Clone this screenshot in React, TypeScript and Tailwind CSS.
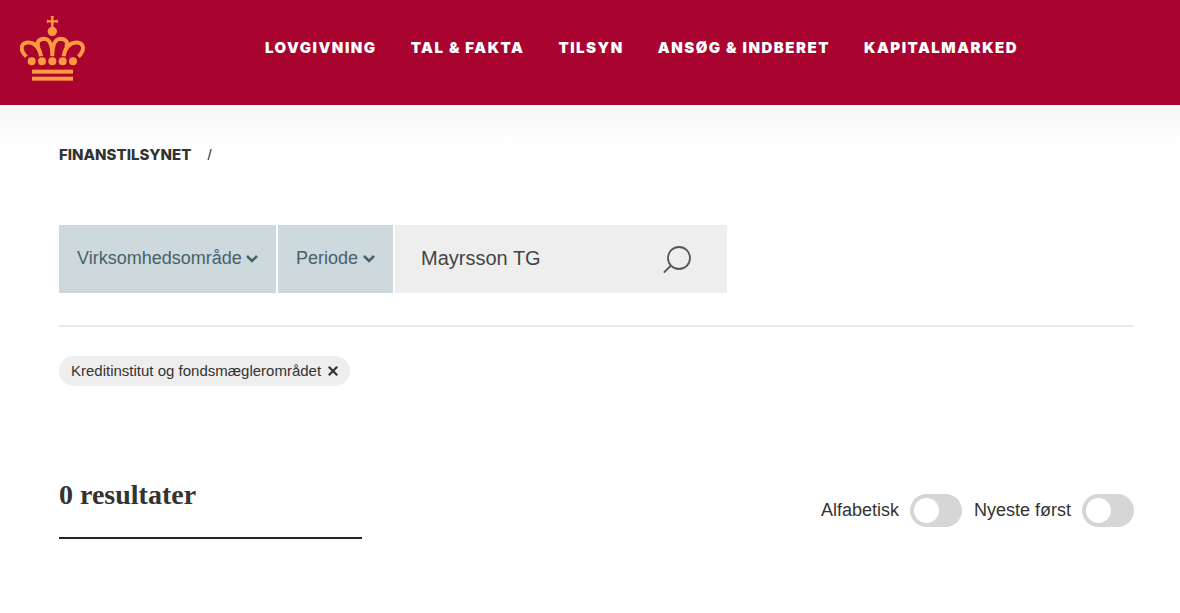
import { useState } from "react";

const navItems = [
  "Lovgivning",
  "Tal & Fakta",
  "Tilsyn",
  "Ansøg & Indberet",
  "Kapitalmarked",
];

export default function App() {
  return (
    <div className="min-h-screen bg-white font-['Liberation_Sans',sans-serif] text-[#333333]">
      <Header />
      <main className="bg-linear-to-b from-[#f6f6f6] to-white to-[40px] pl-[59px] pr-[46px]">
        <Breadcrumb />
        <Filters />
        <hr className="mt-8 border-t-2 border-[#e9e9e9]" />
        <ActiveFilter />
        <Results />
      </main>
    </div>
  );
}

function Header() {
  return (
    <header className="flex h-[105px] bg-[#a9032f] px-5">
      <a href="#" aria-label="Finanstilsynet" className="mt-[15px]">
        <Crown />
      </a>
      <nav className="ml-[179px] mt-[38px] flex gap-[34px] whitespace-nowrap font-['Inter',sans-serif] text-[15px] font-black uppercase leading-5 tracking-widest text-white">
        {navItems.map((item) => (
          <a key={item} href="#" className="h-5">
            {item}
          </a>
        ))}
      </nav>
    </header>
  );
}

function Crown() {
  return (
    <svg
      viewBox="30 30 198 198"
      className="h-[66px] w-[66px]"
      fill="none"
      stroke="#ff9a40"
      aria-hidden="true"
    >
      <path d="M127 33V68M112 49H142" strokeWidth="7" />
      <path d="M122 35H132M112 44V54M142 44V54" strokeWidth="3" />
      <g fill="#ff9a40" stroke="none">
        <circle cx="127" cy="79" r="14" />
        <circle cx="65" cy="169" r="12" />
        <circle cx="96" cy="169" r="12" />
        <circle cx="127" cy="169" r="12" />
        <circle cx="158" cy="169" r="12" />
        <circle cx="189" cy="169" r="12" />
        <rect x="66" y="194" width="123" height="12" />
        <rect x="66" y="215" width="123" height="12" />
      </g>
      <g strokeWidth="12">
        <path d="M49 155C37 143 32 131 37 121C43 110 60 110 72 117C84 125 91 139 93 154" />
        <path d="M86 127C77 111 88 101 103 101C120 102 127 124 127 154C127 124 134 102 151 101C166 101 177 111 168 127" />
        <path d="M205 155C217 143 222 131 217 121C211 110 194 110 182 117C170 125 163 139 161 154" />
      </g>
    </svg>
  );
}

function Breadcrumb() {
  return (
    <nav
      aria-label="Brødkrumme"
      className="flex gap-4 pt-10 text-[15px] leading-5"
    >
      <a href="#" className="font-['Inter',sans-serif] font-extrabold uppercase">
        Finanstilsynet
      </a>
      <span>/</span>
    </nav>
  );
}

function Filters() {
  const [query, setQuery] = useState("Mayrsson TG");

  return (
    <form className="mt-[60px] flex h-[68px] gap-[2px]">
      <Dropdown label="Virksomhedsområde" />
      <Dropdown label="Periode" />
      <div className="flex w-[332px] items-center bg-[#eeeeee] pl-[26px] pr-[35px]">
        <input
          type="text"
          aria-label="Søg"
          value={query}
          onChange={(e) => setQuery(e.target.value)}
          className="min-w-0 flex-1 bg-transparent pb-[2px] text-[20px] leading-6 text-[#444444] outline-none"
        />
        <button type="button" aria-label="Søg" className="mt-[2px]">
          <svg
            viewBox="0 0 30 30"
            className="h-[30px] w-[30px]"
            fill="none"
            stroke="#555555"
            strokeWidth="1.8"
            aria-hidden="true"
          >
            <circle cx="17" cy="13" r="11" />
            <path d="M9 20.5L1.8 27.7" />
          </svg>
        </button>
      </div>
    </form>
  );
}

function Dropdown({ label }: { label: string }) {
  return (
    <div className="relative flex bg-[#cdd9dd] text-[#48616b]">
      <select
        aria-label={label}
        className="appearance-none bg-transparent pb-[2px] pl-[18px] pr-[34px] text-[18px] outline-none"
      >
        <option>{label}</option>
      </select>
      <svg
        viewBox="0 0 12 8"
        className="pointer-events-none absolute right-[18px] top-[30px] h-2 w-3"
        fill="none"
        stroke="currentColor"
        strokeWidth="2.6"
        aria-hidden="true"
      >
        <path d="M1 1L6 6L11 1" />
      </svg>
    </div>
  );
}

function ActiveFilter() {
  return (
    <button
      type="button"
      className="mt-[29px] flex h-[30px] items-center gap-[7px] rounded-full bg-[#eeeeee] px-3 text-[15px] text-[#333333]"
    >
      Kreditinstitut og fondsmæglerområdet
      <svg
        viewBox="0 0 10 10"
        className="h-[10px] w-[10px]"
        stroke="currentColor"
        strokeWidth="2.2"
        aria-hidden="true"
      >
        <path d="M.8 .8L9.2 9.2M9.2 .8L.8 9.2" />
      </svg>
    </button>
  );
}

function Results() {
  return (
    <section className="mt-[91px] flex items-start justify-between">
      <h1 className="w-[303px] border-b-2 border-[#222222] pb-6 font-['Liberation_Serif',serif] text-[28px] font-bold leading-9">
        0 resultater
      </h1>
      <div className="mt-[17px] flex gap-3">
        <Toggle label="Alfabetisk" />
        <Toggle label="Nyeste først" />
      </div>
    </section>
  );
}

function Toggle({ label }: { label: string }) {
  return (
    <label className="flex items-center gap-[11px] text-[18px] leading-6">
      <span className="pb-[2px]">{label}</span>
      <input
        type="checkbox"
        role="switch"
        className="h-[33px] w-[52px] appearance-none rounded-full bg-[#d6d6d6] before:m-1 before:block before:h-[25px] before:w-[25px] before:rounded-full before:bg-white before:content-[''] checked:bg-[#48616b] checked:before:ml-[23px]"
      />
    </label>
  );
}
